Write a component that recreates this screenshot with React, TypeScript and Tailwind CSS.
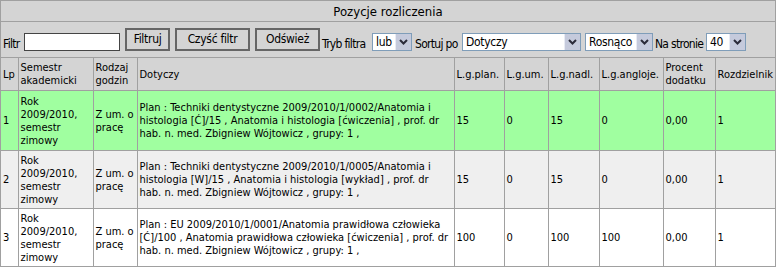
import React from 'react';

const font = { fontFamily: '"DejaVu Sans Condensed", "DejaVu Sans", sans-serif' };

const Chevron = () => (
  <svg width="9" height="6" viewBox="0 0 9 6">
    <path d="M1 1l3.5 3.5L8 1" fill="none" stroke="#2b2b3a" strokeWidth="2" />
  </svg>
);

const Select: React.FC<{ value: string; w: string }> = ({ value, w }) => (
  <div className={`${w} shrink-0 h-[18px] flex border border-[#7f9db9] bg-white`}>
    <span className="flex-1 pl-[3px] leading-[16px] text-[12px] tracking-[-0.3px] text-black whitespace-nowrap overflow-hidden">{value}</span>
    <span className="w-[16px] shrink-0 h-full flex items-center justify-center bg-[#c5cadc] border-l border-[#e8ebf4]">
      <Chevron />
    </span>
  </div>
);

const Btn: React.FC<{ label: string; w: string; ml: string }> = ({ label, w, ml }) => (
  <button className={`${w} ${ml} shrink-0 h-[23px] border-2 border-[#666] bg-[#d4d4d4] text-[12px] tracking-[-0.3px] text-black leading-[17px] whitespace-nowrap`}>
    {label}
  </button>
);

const Label: React.FC<{ text: string; w: string; ml: string }> = ({ text, w, ml }) => (
  <span className={`${w} ${ml} shrink-0 whitespace-nowrap leading-[12px] mb-[1px] tracking-[-0.7px]`}>{text}</span>
);

const rows = [
  {
    lp: '1',
    bg: 'bg-[#a0ffa0]',
    h: 'h-[60px]',
    dot: 'Plan : Techniki dentystyczne 2009/2010/1/0002/Anatomia i histologia [Ć]/15 , Anatomia i histologia [ćwiczenia] , prof. dr hab. n. med. Zbigniew Wójtowicz , grupy: 1 ,',
    nums: ['15', '0', '15', '0', '0,00', '1'],
  },
  {
    lp: '2',
    bg: 'bg-[#efefef]',
    h: 'h-[58px]',
    dot: 'Plan : Techniki dentystyczne 2009/2010/1/0005/Anatomia i histologia [W]/15 , Anatomia i histologia [wykład] , prof. dr hab. n. med. Zbigniew Wójtowicz , grupy: 1 ,',
    nums: ['15', '0', '15', '0', '0,00', '1'],
  },
  {
    lp: '3',
    bg: 'bg-white',
    h: 'h-[58px]',
    dot: 'Plan : EU 2009/2010/1/0001/Anatomia prawidłowa człowieka [Ć]/100 , Anatomia prawidłowa człowieka [ćwiczenia] , prof. dr hab. n. med. Zbigniew Wójtowicz , grupy: 1 ,',
    nums: ['100', '0', '100', '100', '0,00', '1'],
  },
];

const cols = ['w-[17px]', 'w-[75px]', 'w-[44px]', 'w-[317px]', 'w-[50px]', 'w-[44px]', 'w-[51px]', 'w-[64px]', 'w-[52px]', 'w-[60px]'];
const heads = ['Lp', 'Semestr akademicki', 'Rodzaj godzin', 'Dotyczy', 'L.g.plan.', 'L.g.um.', 'L.g.nadl.', 'L.g.angloje.', 'Procent dodatku', 'Rozdzielnik'];

export default function App() {
  const cell = 'border border-[#a0a0a0] px-[2px] align-middle text-left font-normal';
  return (
    <div className="w-[776px] h-[268px] bg-white text-[11px] leading-[13px] text-black" style={font}>
      <div className="border border-[#a0a0a0] bg-[#d4d4d4]">
        <div className="h-[21px] flex items-center justify-center text-[13px] border-b border-[#a0a0a0]">
          Pozycje rozliczenia
        </div>
        <div className="h-[35px] flex items-end pb-[6px] pl-[2px] text-[12px]">
          <Label text="Filtr" w="w-[21px]" ml="ml-0" />
          <input className="w-[96px] shrink-0 h-[18px] bg-white border border-[#444] outline-none" />
          <Btn label="Filtruj" w="w-[45px]" ml="ml-[5px]" />
          <Btn label="Czyść filtr" w="w-[75px]" ml="ml-[5px]" />
          <Btn label="Odśwież" w="w-[65px]" ml="ml-[5px]" />
          <Label text="Tryb filtra" w="w-[48px]" ml="ml-[2px]" />
          <span className="ml-[2px] shrink-0"><Select value="lub" w="w-[40px]" /></span>
          <Label text="Sortuj po" w="w-[45px]" ml="ml-[3px]" />
          <span className="ml-[2px] shrink-0"><Select value="Dotyczy" w="w-[119px]" /></span>
          <span className="ml-[4px] shrink-0"><Select value="Rosnąco" w="w-[68px]" /></span>
          <Label text="Na stronie" w="w-[49px]" ml="ml-[2px]" />
          <span className="ml-[2px] shrink-0"><Select value="40" w="w-[40px]" /></span>
        </div>
        <table className="w-[774px] table-fixed border-collapse -mb-px">
          <colgroup>
            {cols.map((c, i) => (
              <col key={i} className={c} />
            ))}
          </colgroup>
          <thead>
            <tr className="h-[33px] bg-[#d4d4d4]">
              {heads.map((h, i) => (
                <th key={i} className={`${cell} ${i === 0 ? 'border-l-0' : ''} ${i === 9 ? 'border-r-0' : ''}`}>{h}</th>
              ))}
            </tr>
          </thead>
          <tbody>
            {rows.map((r) => (
              <tr key={r.lp} className={`${r.h} ${r.bg}`}>
                <td className={`${cell} border-l-0`}>{r.lp}</td>
                <td className={cell}>Rok 2009/2010, semestr zimowy</td>
                <td className={cell}>Z um. o pracę</td>
                <td className={cell}>{r.dot}</td>
                {r.nums.map((n, i) => (
                  <td key={i} className={`${cell} ${i === 5 ? 'border-r-0' : ''}`}>{n}</td>
                ))}
              </tr>
            ))}
          </tbody>
        </table>
      </div>
    </div>
  );
}
